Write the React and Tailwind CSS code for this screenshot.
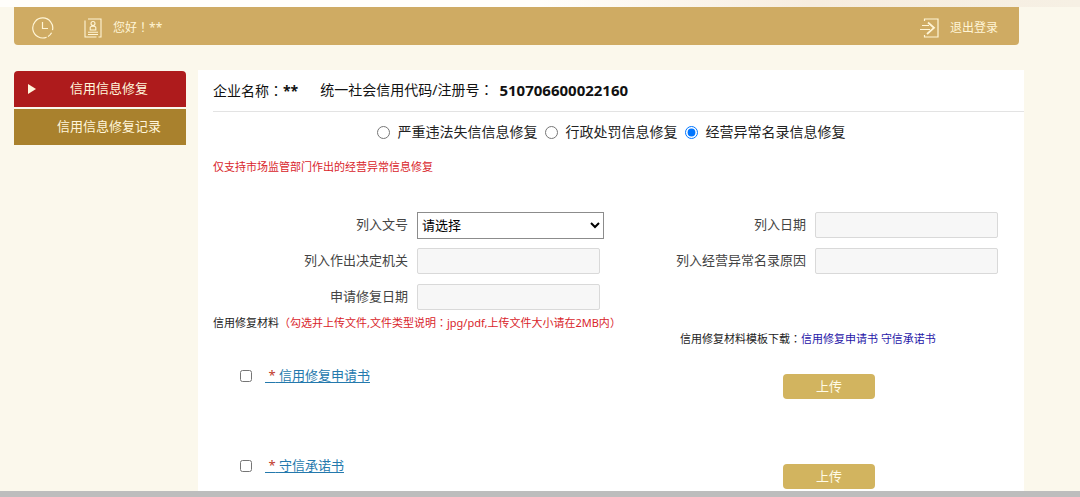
import React from "react";

function ClockIcon() {
  return (
    <svg width="22" height="22" viewBox="0 0 22 22" fill="none" stroke="currentColor" strokeWidth="1.2" aria-hidden="true">
      <path d="M20.5 13.2A10 10 0 1 0 14.6 20.2" />
      <path d="M16 19.6a10 10 0 0 0 3.6-3.8" />
      <path d="M10.5 5v6.5H16" />
    </svg>
  );
}

function BadgeIcon() {
  return (
    <svg width="18" height="20" viewBox="0 0 18 20" fill="none" stroke="currentColor" strokeWidth="1.1" aria-hidden="true">
      <path d="M4 1H17v18h-2.5M12.5 19H1V2.5" />
      <circle cx="9" cy="5.500" r="2" />
      <path d="M6.200 12V9.600Q6.200 8.200 9 8.200T11.800 9.600V12Z" />
      <path d="M4 14.200h10M4 16.500h10" />
    </svg>
  );
}

function LogoutIcon() {
  return (
    <svg width="19" height="20" viewBox="0 0 19 20" fill="none" stroke="currentColor" strokeWidth="1.2" aria-hidden="true">
      <path d="M4.500 3V1H18v18H4.500v-2" />
      <path d="M2 7.500H9M0 11.500h10" strokeWidth="1" />
      <path d="M8 4.500l6 5.300L7 16" strokeWidth="1.800" />
    </svg>
  );
}

/* Full-width punctuation, centred in its cell */
function Punct({ children }) {
  return <span className="font-['Noto_Sans_CJK_TC',sans-serif] leading-none">{children}</span>;
}

function MenuItem({ label, active }) {
  return (
    <a
      href="#"
      className={
        "flex h-9 items-center pl-[14px] pr-1 text-[13px] text-[#fff6dc] " +
        (active ? "rounded-t bg-[#ae1b1c]" : "bg-[#a9812d]")
      }
    >
      <span className="w-2">
        {active && (
          <svg width="8" height="10" viewBox="0 0 8 10" fill="currentColor" aria-hidden="true">
            <path d="M0 0l8 5-8 5z" />
          </svg>
        )}
      </span>
      <span className="flex-1 text-center">{label}</span>
    </a>
  );
}

function RadioOption({ label, checked }) {
  return (
    <label className="flex items-center gap-2">
      <input type="radio" name="repairType" defaultChecked={checked} className="size-[13px]" />
      {label}
    </label>
  );
}

function Field({ id, label, children }) {
  return (
    <div className="flex h-9 items-center gap-[9px]">
      <label htmlFor={id} className="w-[49%] text-right">{label}</label>
      {children || (
        <input id={id} type="text" disabled className="h-[26px] w-[46%] rounded-xs border border-[#d9d9d9] bg-[#f7f7f7]" />
      )}
    </div>
  );
}

function Material({ id, name }) {
  return (
    <div className="grid grid-cols-2 items-start">
      <div className="flex items-start pl-[27px]">
        <input id={id} type="checkbox" aria-label={name} className="mt-1 size-3" />
        <a href="#" className="ml-[13px] text-[13px] leading-[18px] text-[#2479ad] underline underline-offset-2">
          <span className="text-[#c0392b]">&nbsp;*</span>&nbsp;{name}
        </a>
      </div>
      <div className="pl-[172px]">
        <button type="button" className="mt-2 block h-[25px] w-[92px] rounded bg-[#d2b45f] text-[13px] text-[#fffbe6]">
          上传
        </button>
      </div>
    </div>
  );
}

export default function App() {
  return (
    <div className="flex min-h-screen flex-col bg-[#fbf8ec] font-['Noto_Sans','Noto_Sans_CJK_SC',sans-serif] text-[#222]">
      <div className="h-[7px] bg-linear-to-r from-[#fffefb] from-50% via-[#f7ede0] via-75% to-[#f6f0e4]" />

      <header className="ml-[14px] mr-[61px] flex h-[38px] items-center rounded-b bg-[#cfab63] pl-[18px] pr-[21px] pt-[3px] text-xs text-[#fff5d6]">
        <ClockIcon />
        <div className="ml-[30px] flex items-center gap-[11px]">
          <BadgeIcon />
          <span>您好<Punct>！</Punct>**</span>
        </div>
        <a href="#" className="ml-auto flex items-center gap-[11px]">
          <LogoutIcon />
          退出登录
        </a>
      </header>

      <div className="mt-[25px] flex flex-1 pl-[14px] pr-14">
        <nav className="mr-3 flex w-[172px] shrink-0 flex-col gap-0.5 pt-px">
          <MenuItem label="信用信息修复" active />
          <MenuItem label="信用信息修复记录" />
        </nav>

        <main className="min-w-0 flex-1 bg-white px-[15px] pb-0.5">
          <div className="-mr-[15px] flex h-[42px] items-center gap-[22px] border-b border-[#e3e3e3] text-sm text-[#111]">
            <span>企业名称<Punct>：</Punct><b>**</b></span>
            <span className="flex items-center">
              <span>统一社会信用代码/注册号<Punct>：</Punct></span>
              <b className="ml-1.5 text-[15px]">510706600022160</b>
            </span>
          </div>

          <form>
            <div className="flex h-10 items-center justify-center gap-[7px] text-sm">
              <RadioOption label="严重违法失信信息修复" />
              <RadioOption label="行政处罚信息修复" />
              <RadioOption label="经营异常名录信息修复" checked />
            </div>
            <p className="text-[11px] leading-[30px] text-[#d9252b]">仅支持市场监管部门作出的经营异常信息修复</p>

            <div className="mt-[25px] grid grid-cols-2 text-[13px] text-[#444]">
              <Field id="docNo" label="列入文号">
                <select id="docNo" className="h-[27px] w-[47%] border border-[#8c8c8c] bg-white text-black">
                  <option>请选择</option>
                </select>
              </Field>
              <Field id="listDate" label="列入日期" />
              <Field id="authority" label="列入作出决定机关" />
              <Field id="reason" label="列入经营异常名录原因" />
              <Field id="applyDate" label="申请修复日期" />
            </div>

            <p className="text-[11px] leading-4">
              信用修复材料
              <span className="text-[#d9252b]">
                <Punct>（</Punct>勾选并上传文件,文件类型说明<Punct>：</Punct>jpg/pdf,上传文件大小请在2MB内<Punct>）</Punct>
              </span>
            </p>
            <div className="grid grid-cols-2 text-[11px] leading-4">
              <p className="col-start-2 pl-[69px]">
                信用修复材料模板下载<Punct>：</Punct>
                <a href="#" className="text-[#1f16a8]">信用修复申请书</a>{" "}
                <a href="#" className="text-[#1f16a8]">守信承诺书</a>
              </p>
            </div>

            <div className="flex flex-col gap-[57px] pt-[19px]">
              <Material id="applyForm" name="信用修复申请书" />
              <Material id="promise" name="守信承诺书" />
            </div>
          </form>
        </main>
      </div>

      <footer className="h-1.5 bg-[#bdbdbd]" />
    </div>
  );
}
